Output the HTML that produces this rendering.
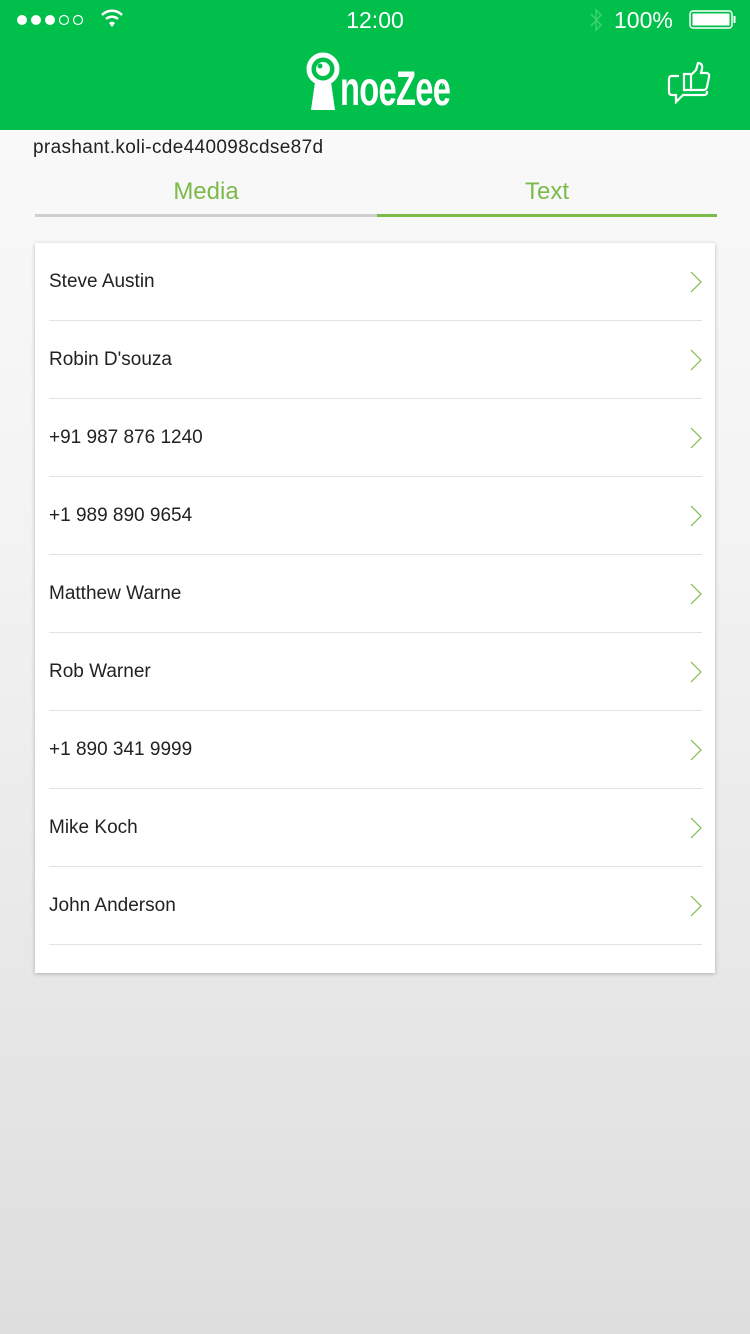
<!DOCTYPE html>
<html><head><meta charset="utf-8"><style>
*{margin:0;padding:0;box-sizing:border-box}
body{width:750px;height:1334px;overflow:hidden;font-family:"Liberation Sans",sans-serif;background:linear-gradient(#fbfbfb 0%,#f3f3f3 40%,#dedede 100%);position:relative}
.hdr{position:absolute;top:0;left:0;width:750px;height:130px;background:#00bf4b;color:#fff}
.t{position:absolute}
.card{position:absolute;left:35px;top:243px;width:680px;height:730px;background:#fff;box-shadow:0 1px 4px rgba(0,0,0,.25)}
.row{position:absolute;left:14px;width:653px;height:78px;border-bottom:1px solid #e2e2e2;font-size:19px;color:#222;line-height:78px}
.row svg{position:absolute;right:0;top:28px}
</style></head><body>
<div class="hdr">
 <div class="t" style="left:16px;top:12px;">
  <svg width="70" height="16"><circle cx="6" cy="8" r="5" fill="#fff"/><circle cx="20" cy="8" r="5" fill="#fff"/><circle cx="34" cy="8" r="5" fill="#fff"/><circle cx="48" cy="8" r="4.5" fill="none" stroke="#fff" stroke-width="1.2"/><circle cx="62" cy="8" r="4.5" fill="none" stroke="#fff" stroke-width="1.2"/></svg>
 </div>
 <svg class="t" style="left:100px;top:8px" width="24" height="20"><path d="M2 7 A14 14 0 0 1 22 7" stroke="#fff" stroke-width="2.5" fill="none"/><path d="M6 11 A9 9 0 0 1 18 11" stroke="#fff" stroke-width="2.5" fill="none"/><path d="M9 15 L12 19 L15 15 A4 4 0 0 0 9 15Z" fill="#fff"/></svg>
 <div class="t" style="left:0;width:750px;text-align:center;top:7px;font-size:23px">12:00</div>
 <svg class="t" style="left:588px;top:7px" width="16" height="26"><path d="M3 7 L13 18 L8 23 L8 3 L13 8 L3 19" stroke="#3ad46f" stroke-width="1.5" fill="none"/></svg>
 <div class="t" style="left:614px;top:7px;font-size:23px">100%</div>
 <svg class="t" style="left:689px;top:10px" width="48" height="20"><rect x="1" y="1" width="42" height="17" rx="3" fill="none" stroke="#fff" stroke-width="1.5"/><rect x="3.5" y="3.5" width="37" height="12" fill="#fff"/><rect x="44.5" y="6" width="2" height="7" fill="#fff"/></svg>
 <svg class="t" style="left:306px;top:52px" width="34" height="58"><circle cx="17" cy="17" r="14" fill="none" stroke="#fff" stroke-width="5"/><circle cx="17" cy="17" r="7" fill="#fff"/><circle cx="14" cy="14" r="2.5" fill="#00bf4b"/><path d="M9 30 L25 30 L29 58 L5 58Z" fill="#fff"/></svg>
 <div class="t" style="left:340px;top:66px;font-size:48px;font-weight:bold;letter-spacing:-1px;transform:scaleX(.68);transform-origin:left;line-height:48px">noeZee</div>
 <div class="t" style="left:441px;top:82px;font-size:5px">TM</div>
 <svg class="t" style="left:666px;top:60px" width="46" height="44" viewBox="0 0 46 44"><path d="M13 16 L6 16 Q3 16 3 19 L3 32 Q3 35 6 35 L10 35 L10 42 L17 35 L38 35 Q41 35 41 32 L41 31" stroke="#fff" stroke-width="2.2" fill="none"/><rect x="18" y="14" width="7" height="16" fill="none" stroke="#fff" stroke-width="2.2"/><path d="M25 15 L30 10 L32 3 Q37 3 36 9 L35 13 L41 13 Q44 14 43 17 L41 27 Q40 30 38 30 L25 30" stroke="#fff" stroke-width="2.2" fill="none"/></svg>
</div>
<div class="t" style="left:33px;top:137px;font-size:19px;color:#222;letter-spacing:0.35px">prashant.koli-cde440098cdse87d</div>
<div class="t" style="left:35px;width:342px;text-align:center;top:178px;font-size:24px;color:#7cba4a">Media</div>
<div class="t" style="left:377px;width:340px;text-align:center;top:178px;font-size:24px;color:#7cba4a">Text</div>
<div class="t" style="left:35px;top:214px;width:342px;height:3px;background:#cfcfcf"></div>
<div class="t" style="left:377px;top:214px;width:340px;height:3px;background:#7cba4a"></div>
<div class="card">
 <div class="row" style="top:0">Steve Austin<svg width="12" height="22"><path d="M1 1 L11 11 L1 21" stroke="#7cba4a" stroke-width="1.2" fill="none"/></svg></div>
 <div class="row" style="top:78px">Robin D'souza<svg width="12" height="22"><path d="M1 1 L11 11 L1 21" stroke="#7cba4a" stroke-width="1.2" fill="none"/></svg></div>
 <div class="row" style="top:156px">+91 987 876 1240<svg width="12" height="22"><path d="M1 1 L11 11 L1 21" stroke="#7cba4a" stroke-width="1.2" fill="none"/></svg></div>
 <div class="row" style="top:234px">+1 989 890 9654<svg width="12" height="22"><path d="M1 1 L11 11 L1 21" stroke="#7cba4a" stroke-width="1.2" fill="none"/></svg></div>
 <div class="row" style="top:312px">Matthew Warne<svg width="12" height="22"><path d="M1 1 L11 11 L1 21" stroke="#7cba4a" stroke-width="1.2" fill="none"/></svg></div>
 <div class="row" style="top:390px">Rob Warner<svg width="12" height="22"><path d="M1 1 L11 11 L1 21" stroke="#7cba4a" stroke-width="1.2" fill="none"/></svg></div>
 <div class="row" style="top:468px">+1 890 341 9999<svg width="12" height="22"><path d="M1 1 L11 11 L1 21" stroke="#7cba4a" stroke-width="1.2" fill="none"/></svg></div>
 <div class="row" style="top:546px">Mike Koch<svg width="12" height="22"><path d="M1 1 L11 11 L1 21" stroke="#7cba4a" stroke-width="1.2" fill="none"/></svg></div>
 <div class="row" style="top:624px">John Anderson<svg width="12" height="22"><path d="M1 1 L11 11 L1 21" stroke="#7cba4a" stroke-width="1.2" fill="none"/></svg></div>
</div>
</body></html>
